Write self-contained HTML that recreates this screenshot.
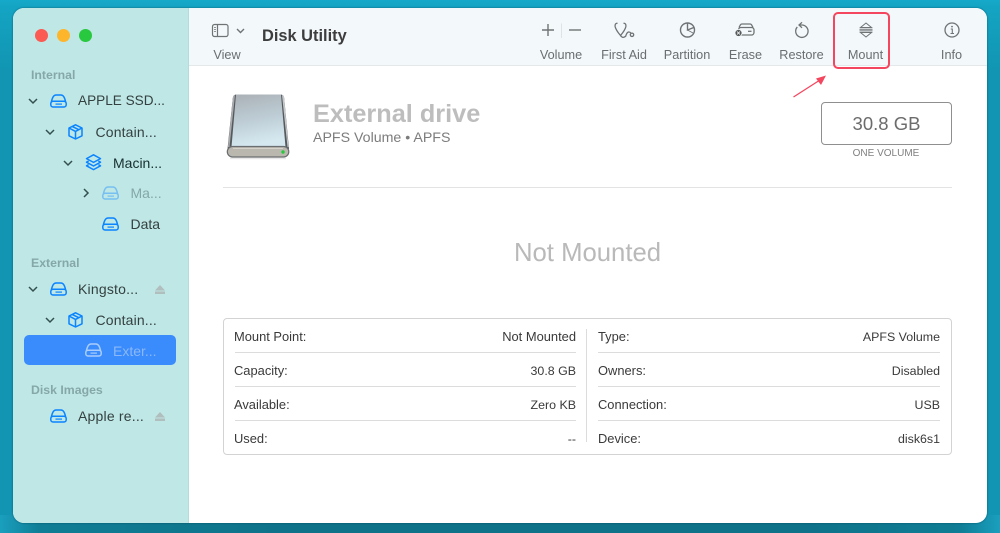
<!DOCTYPE html>
<html><head><meta charset="utf-8"><style>
html,body{margin:0;padding:0}
body{width:1000px;height:533px;overflow:hidden;position:relative;font-family:"Liberation Sans",sans-serif;background:#1195b2}
.a{position:absolute;white-space:nowrap}
#bgt{position:absolute;left:0;top:0;width:1000px;height:70px;background:linear-gradient(180deg,#17a9c9 0,#14a4c3 7px,#1195b2 70px)}
#bgb{position:absolute;left:0;top:515px;width:1000px;height:18px;background:linear-gradient(90deg,#1a9fbe 0,#0f7d95 40px,#0e7289 300px,#0e7289 800px,#0f7d95 960px,#1a9fbe 100%)}
#win{position:absolute;left:13px;top:8px;width:974px;height:515px;border-radius:11px;overflow:hidden;background:#fff;box-shadow:0 0 1px 1px rgba(0,60,80,.25)}
#side{position:absolute;left:0;top:0;width:175px;height:515px;background:#bfe7e6;border-right:1px solid #b5dcdc}
#bar{position:absolute;left:176px;top:0;width:798px;height:57px;background:#f3f8fb;border-bottom:1px solid #e4e8ea}
.s{font-size:14px;color:#33403f;line-height:16px}
.h{font-size:12.3px;font-weight:bold;color:#86a7a8;line-height:14px}
.t{font-size:12.700px;color:#6a6e70;line-height:14px;text-align:center;transform:translateX(-50%)}
.k{font-size:12.900px;color:#3a3a3a;line-height:14px}
.v{font-size:12.400px;color:#3a3a3a;line-height:14px;text-align:right}
.ln{position:absolute;height:1.400px;background:#dcdcdc}
svg{position:absolute;overflow:visible}
</style></head><body>
<div id="bgt"></div><div id="bgb"></div>
<svg width="0" height="0" style="position:absolute"><defs>
<g id="disk" fill="none" stroke="currentColor" stroke-width="1.500"><path d="M1.300 8.500 Q2.600 1 6 1 H11 Q14.400 1 15.700 8.500"/><rect x=".8" y="7.200" width="15.400" height="5.800" rx="2.200"/><path d="M5.500 10.100H12" stroke-width="1.200"/></g>
<g id="box" fill="none" stroke="#0a84ff" stroke-width="1.500" stroke-linejoin="round"><path d="M7.500 .8 L14 4 V11.800 L7.500 15 L1 11.800 V4 Z"/><path d="M1 4 L7.500 7.400 L14 4 M7.500 7.400 V15 M4.200 2.400 L10.800 5.700"/></g>
<g id="stack" fill="none" stroke="#0a84ff" stroke-width="1.500" stroke-linejoin="round"><path d="M7.500 .8 L14.500 4.600 L7.500 8.400 L.5 4.600 Z"/><path d="M2.600 7 L.5 8.200 L7.500 12 L14.500 8.200 L12.400 7"/><path d="M2.600 10.600 L.5 11.800 L7.500 15.600 L14.500 11.800 L12.400 10.600"/></g>
<path id="chev" d="M1 1 L5 5 L9 1" fill="none" stroke="#33504f" stroke-width="1.500"/>
<g id="ej" fill="#b0bebe"><path d="M5 0 L10 5.500 H0 Z"/><rect y="6.500" width="10" height="2.500"/></g>
</defs></svg>

<div id="win">
<div id="side"></div>
<div id="bar"></div>
</div>

<!-- traffic lights -->
<div class="a" style="left:35px;top:29px;width:13px;height:13px;border-radius:50%;background:#fb5a52"></div>
<div class="a" style="left:57px;top:29px;width:13px;height:13px;border-radius:50%;background:#fdb52c"></div>
<div class="a" style="left:79px;top:29px;width:13px;height:13px;border-radius:50%;background:#28c83f"></div>

<!-- sidebar -->
<div class="a h" style="left:31px;top:68px">Internal</div>
<svg style="left:28px;top:98px" width="10" height="7"><use href="#chev"/></svg>
<svg style="left:50px;top:93.500px;color:#0a84ff" width="17" height="14"><use href="#disk"/></svg>
<div class="a s" style="left:78px;top:93px;font-size:13.600px">APPLE SSD...</div>
<svg style="left:45px;top:129px" width="10" height="7"><use href="#chev"/></svg>
<svg style="left:68px;top:123.500px" width="15" height="16"><use href="#box"/></svg>
<div class="a s" style="left:95.500px;top:124px;letter-spacing:.15px">Contain...</div>
<svg style="left:63px;top:160px" width="10" height="7"><use href="#chev"/></svg>
<svg style="left:85.500px;top:153.500px" width="15" height="16"><use href="#stack"/></svg>
<div class="a s" style="left:113px;top:154.500px;color:#16302f">Macin...</div>
<svg style="left:83px;top:188px" width="7" height="10"><path d="M1 1 L5 5 L1 9" fill="none" stroke="#33504f" stroke-width="1.500"/></svg>
<svg style="left:102px;top:186px;opacity:.4;color:#0a84ff" width="17" height="14"><use href="#disk"/></svg>
<div class="a s" style="left:130.500px;top:185px;color:#85a6a7">Ma...</div>
<svg style="left:102px;top:217px;color:#0a84ff" width="17" height="14"><use href="#disk"/></svg>
<div class="a s" style="left:130.500px;top:216px">Data</div>

<div class="a h" style="left:31px;top:256px">External</div>
<svg style="left:28px;top:286px" width="10" height="7"><use href="#chev"/></svg>
<svg style="left:50px;top:282px;color:#0a84ff" width="17" height="14"><use href="#disk"/></svg>
<div class="a s" style="left:78px;top:281px;letter-spacing:.2px">Kingsto...</div>
<svg style="left:155px;top:285px" width="10" height="9"><use href="#ej"/></svg>
<svg style="left:45px;top:317px" width="10" height="7"><use href="#chev"/></svg>
<svg style="left:68px;top:311.500px" width="15" height="16"><use href="#box"/></svg>
<div class="a s" style="left:95.500px;top:312px;letter-spacing:.15px">Contain...</div>
<div class="a" style="left:24px;top:335px;width:152px;height:30px;border-radius:5px;background:#3a8bfb"></div>
<svg style="left:85px;top:343px;color:#a9cdfc" width="17" height="14"><use href="#disk"/></svg>
<div class="a s" style="left:113px;top:343px;color:#8ab8fb">Exter...</div>

<div class="a h" style="left:31px;top:383px">Disk Images</div>
<svg style="left:50px;top:409px;color:#0a84ff" width="17" height="14"><use href="#disk"/></svg>
<div class="a s" style="left:78px;top:408px;letter-spacing:.2px">Apple re...</div>
<svg style="left:155px;top:412px" width="10" height="9"><use href="#ej"/></svg>

<!-- toolbar -->
<svg style="left:212px;top:24px" width="17" height="14" fill="none" stroke="#6f7374" stroke-width="1.200"><rect x=".5" y=".5" width="15.500" height="12" rx="2"/><path d="M5.500 .5V12.500"/><path d="M2 3.500H4M2 5.500H4M2 7.500H4" stroke-width=".8"/></svg>
<svg style="left:236px;top:28px" width="9" height="6" fill="none" stroke="#6f7374" stroke-width="1.400"><path d="M1 1L4.500 4.500L8 1"/></svg>
<div class="a t" style="left:227px;top:47.500px">View</div>
<div class="a" style="left:262px;top:27px;font-size:16.400px;font-weight:bold;color:#3d3d3d;line-height:19px">Disk Utility</div>

<svg style="left:541px;top:23px" width="50" height="16" fill="none" stroke="#6f7374" stroke-width="1.400"><path d="M7 1V13M1 7H13"/><path d="M20.500 .5V15" stroke="#dfe3e5" stroke-width="1"/><path d="M28 7H40"/></svg>
<div class="a t" style="left:561px;top:47.500px">Volume</div>

<svg style="left:614px;top:22px" width="21" height="17" fill="none" stroke="#6f7374" stroke-width="1.300"><path d="M3.500 1.300H2.800Q.8 1.800 1.100 4.500Q1.800 8 6.500 13.500Q11.200 8 11.900 4.500Q12.200 1.800 10.200 1.300H9.500"/><path d="M6.500 13.500Q9 17 11.800 14Q12.700 10.500 14.500 10Q16 9.800 16.800 11"/><circle cx="18" cy="12.800" r="1.700"/></svg>
<div class="a t" style="left:624px;top:47.500px">First Aid</div>

<svg style="left:680px;top:22px" width="16" height="16" fill="none" stroke="#6f7374" stroke-width="1.400"><circle cx="7.500" cy="8" r="7"/><path d="M7.500 1V8L13.800 5.500"/><path d="M7.500 8L13 11" stroke-width=".8"/></svg>
<div class="a t" style="left:687px;top:47.500px">Partition</div>

<svg style="left:734px;top:23px" width="21" height="15" fill="none" stroke="#6f7374" stroke-width="1.300"><path d="M5 4.500L6.500 1.700Q7 1 8 1H16Q17 1 17.500 1.700L19 4.500"/><rect x="4.500" y="4.500" width="15.500" height="7.500" rx="2.500"/><path d="M14 8.300H17.500"/><circle cx="4.500" cy="10" r="3.500" fill="#55595a" stroke="#f3f8fb" stroke-width=".8"/><path d="M3 8.500L6 11.500M6 8.500L3 11.500" stroke="#fff" stroke-width=".8"/></svg>
<div class="a t" style="left:745.500px;top:47.500px">Erase</div>

<svg style="left:795px;top:22px" width="15" height="16" fill="none" stroke="#6f7374" stroke-width="1.300"><path d="M2.300 5A6.200 6.200 0 1 0 6.500 3H4"/><path d="M7 .3L4 3L7 5.800"/></svg>
<div class="a t" style="left:801.500px;top:47.500px">Restore</div>

<svg style="left:859px;top:22px" width="14" height="17" fill="none" stroke="#6f7374" stroke-width="1"><path d="M1.500 5.500L7 1L12.500 5.500Z"/><path d="M1.500 10.500L7 15L12.500 10.500Z"/><path d="M.5 7.200H13.500M.5 8.900H13.500"/></svg>
<div class="a t" style="left:865.500px;top:47.500px">Mount</div>

<svg style="left:944px;top:22px" width="16" height="16" fill="none" stroke="#6f7374" stroke-width="1.300"><circle cx="8" cy="8" r="7"/><path d="M6.800 7H8.300V11.500M6.500 11.500H10" stroke-width="1.100"/><circle cx="8" cy="4.600" r=".9" fill="#6f7374" stroke="none"/></svg>
<div class="a t" style="left:951.500px;top:47.500px">Info</div>

<!-- highlight and arrow -->
<div class="a" style="left:832.500px;top:12px;width:53px;height:52.500px;border:2.500px solid #f4465e;border-radius:5px"></div>
<svg style="left:790px;top:72px" width="40" height="28"><path d="M3.500 25L30 8" stroke="#f4465e" stroke-width="1.300" fill="none"/><path d="M36 3.500L26 6.500L31 13Z" fill="#f4465e"/></svg>

<!-- drive icon -->
<svg style="left:225px;top:94px" width="66" height="66">
<defs>
<linearGradient id="dg" x1="0" y1="0" x2="0.200" y2="1"><stop offset="0" stop-color="#aab0b5"/><stop offset=".5" stop-color="#bccbd3"/><stop offset="1" stop-color="#d5e8f0"/></linearGradient>
</defs>
<path d="M7.800 4Q8.300 .8 11 .5H56Q58.700 .8 59.200 4L64 55H2.500Z" fill="#55595c"/>
<path d="M7.800 4Q8.300 1.500 10 1L4.500 53H3Z" fill="#a9acae"/>
<path d="M59.200 4Q58.700 1.500 57 1L62.500 53H63.500Z" fill="#c5c8ca"/>
<path d="M11 .5H56L60.500 53H6.500Z" fill="url(#dg)"/>
<rect x="2.300" y="52.500" width="61.500" height="10.500" rx="5.200" fill="#bab7ae" stroke="#6a6e70" stroke-width="1.200"/>
<path d="M8 54.500H58" stroke="#d4d2cb" stroke-width="1"/>
<circle cx="58" cy="58" r="1.700" fill="#28c83f"/>
<path d="M5 64.500H61" stroke="#00000018" stroke-width="1.500"/>
</svg>

<div class="a" style="left:313px;top:99px;font-size:25.300px;font-weight:bold;color:#bdbdbd;line-height:30px">External drive</div>
<div class="a" style="left:313px;top:130px;font-size:14.200px;color:#7c7c7c;line-height:17px">APFS Volume • APFS</div>

<div class="a" style="left:821px;top:102px;width:129px;height:41px;border:1.300px solid #8f8f8f;border-radius:4px;text-align:center;font-size:18.500px;line-height:41px;color:#6c6c6c">30.8 GB</div>
<div class="a" style="left:886px;top:148px;transform:translateX(-50%);font-size:10px;color:#808080;line-height:12px">ONE VOLUME</div>

<div class="ln" style="left:223px;top:187px;width:729px;background:#e3e3e3"></div>
<div class="a" style="left:587.500px;top:238px;transform:translateX(-50%);font-size:25.700px;color:#b9b9b9;line-height:30px">Not Mounted</div>

<!-- table -->
<div class="a" style="left:223px;top:318px;width:727px;height:135px;border:1px solid #d3d3d3;border-radius:4px"></div>
<div class="ln" style="left:586px;top:329px;width:1px;height:113px"></div>
<div class="ln" style="left:235px;top:352px;width:341px"></div>
<div class="ln" style="left:235px;top:386px;width:341px"></div>
<div class="ln" style="left:235px;top:420px;width:341px"></div>
<div class="ln" style="left:598px;top:352px;width:342px"></div>
<div class="ln" style="left:598px;top:386px;width:342px"></div>
<div class="ln" style="left:598px;top:420px;width:342px"></div>

<div class="a k" style="left:234px;top:329.500px">Mount Point:</div>
<div class="a k" style="left:234px;top:363.500px">Capacity:</div>
<div class="a k" style="left:234px;top:397.500px">Available:</div>
<div class="a k" style="left:234px;top:431.500px">Used:</div>
<div class="a v" style="right:424px;top:329.500px;font-size:12.900px">Not Mounted</div>
<div class="a v" style="right:424px;top:363.500px">30.8 GB</div>
<div class="a v" style="right:424px;top:397.500px">Zero KB</div>
<div class="a v" style="right:424px;top:431.500px">--</div>
<div class="a k" style="left:598px;top:329.500px">Type:</div>
<div class="a k" style="left:598px;top:363.500px">Owners:</div>
<div class="a k" style="left:598px;top:397.500px">Connection:</div>
<div class="a k" style="left:598px;top:431.500px">Device:</div>
<div class="a v" style="right:60px;top:329.500px">APFS Volume</div>
<div class="a v" style="right:60px;top:363.500px">Disabled</div>
<div class="a v" style="right:60px;top:397.500px">USB</div>
<div class="a v" style="right:60px;top:431.500px">disk6s1</div>
</body></html>
